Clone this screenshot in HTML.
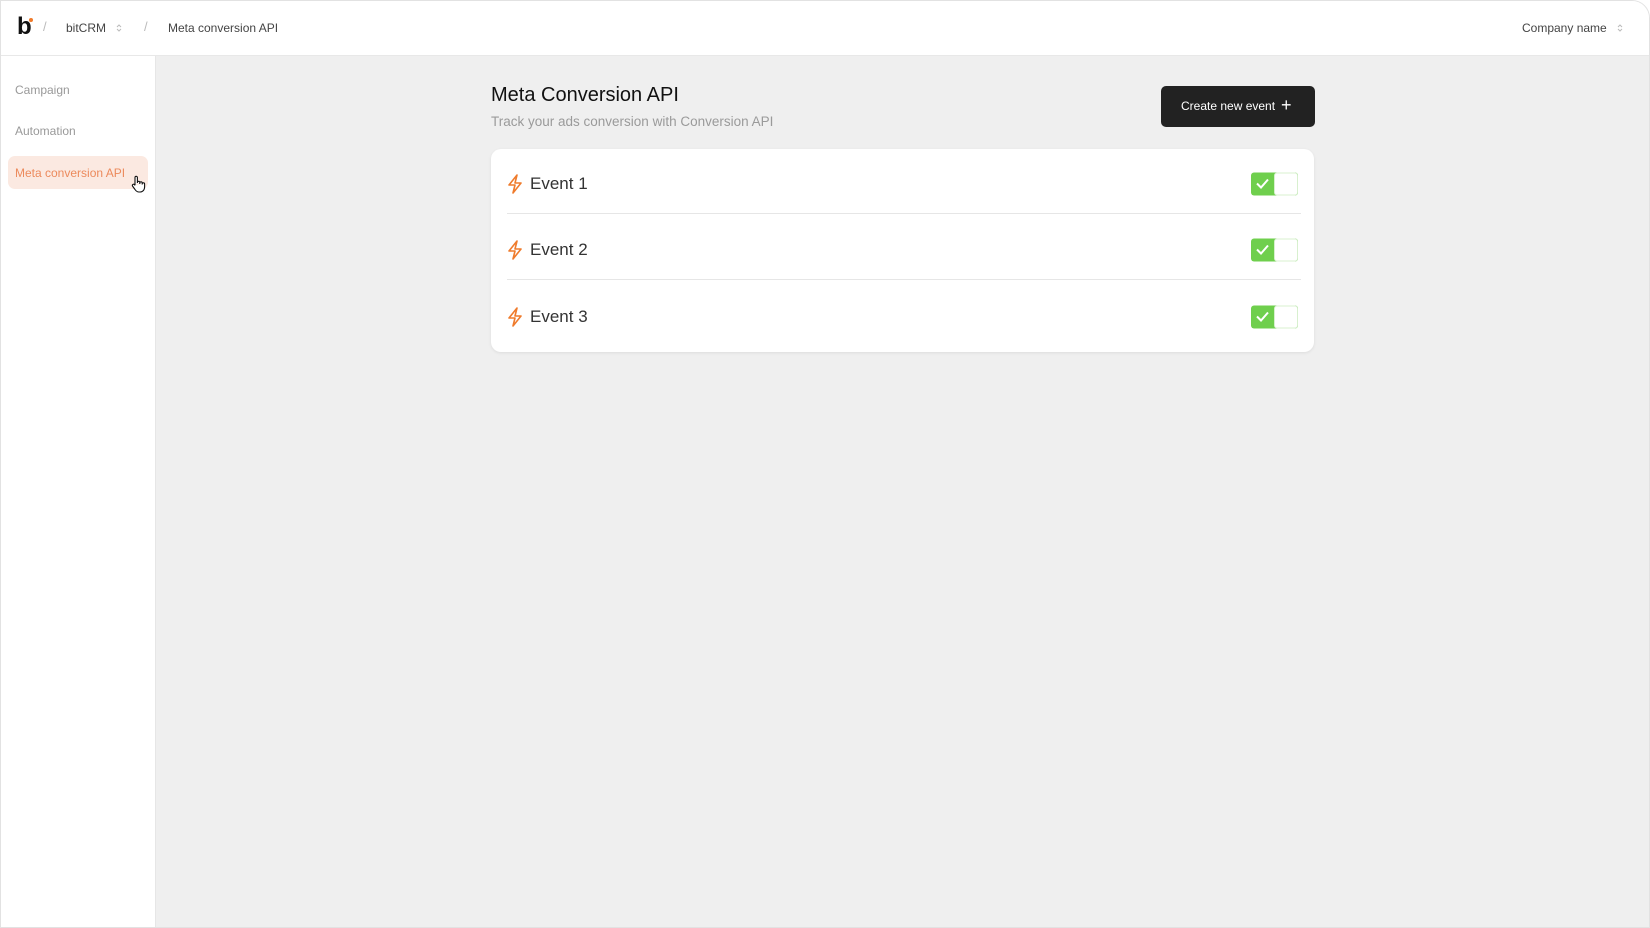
<!DOCTYPE html>
<html><head><meta charset="utf-8"><style>
*{margin:0;padding:0;box-sizing:border-box}
body{width:1650px;height:928px;overflow:hidden;background:#fff;font-family:"Liberation Sans",sans-serif;position:relative}
.frame{position:absolute;left:0;top:0;width:1650px;height:928px;border:1px solid #e2e2e2;border-radius:0 18px 0 0;overflow:hidden}
.hdr{position:absolute;left:0;top:0;width:1650px;height:55px;border-bottom:1px solid #e8e8e8;background:#fff}
.t{position:absolute;font-size:12px;color:#444;white-space:nowrap}
.side{position:absolute;left:0;top:55px;width:155px;bottom:0;background:#fff;border-right:1px solid #e6e6e6}
.main{position:absolute;left:155px;top:55px;right:0;bottom:0;background:#efefef}
.nav{position:absolute;left:14px;font-size:12px;color:#999}
.card{position:absolute;left:490px;top:148px;width:823px;height:203px;background:#fff;border-radius:10px;box-shadow:0 1px 3px rgba(0,0,0,.08)}
.row{position:absolute;left:0;width:100%;height:66px}
.ev{position:absolute;left:39px;font-size:17px;color:#333;top:50%;transform:translateY(-50%)}
.ic{position:absolute;left:16px;top:50%;transform:translateY(-50%)}
.tg{position:absolute;left:760px;top:50%;transform:translateY(-50%);width:47px;height:23px;border-radius:3px;background:#6fcf4d;overflow:hidden}
.tg .k{position:absolute;right:0;top:0;width:24px;height:23px;background:#fff;border:1px solid #d8f0cf;border-radius:3px}
.tg svg{position:absolute;left:5px;top:5px}
.div{position:absolute;left:16px;right:13px;height:1px;background:#e6e6e6}
</style></head><body>
<div class="frame">
<div class="hdr">
 <div style="position:absolute;left:16px;top:12px;font-size:24px;font-weight:bold;color:#111;line-height:28px">b</div>
 <div style="position:absolute;left:28px;top:17px;width:4px;height:4px;border-radius:50%;background:#f07a2a"></div>
 <div class="t" style="left:42px;top:18px;color:#bbb;font-size:13px">/</div>
 <div class="t" style="left:65px;top:20px">bitCRM</div>
 <svg style="position:absolute;left:115px;top:22px" width="6" height="10" viewBox="0 0 6 10"><path d="M1 4l2-2 2 2M1 6l2 2 2-2" stroke="#bbb" fill="none"/></svg>
 <div class="t" style="left:143px;top:18px;color:#bbb;font-size:13px">/</div>
 <div class="t" style="left:167px;top:20px">Meta conversion API</div>
 <div class="t" style="left:1521px;top:20px">Company name</div>
 <svg style="position:absolute;left:1616px;top:22px" width="6" height="10" viewBox="0 0 6 10"><path d="M1 4l2-2 2 2M1 6l2 2 2-2" stroke="#bbb" fill="none"/></svg>
</div>
<div class="side">
 <div class="nav" style="top:27px">Campaign</div>
 <div class="nav" style="top:68px">Automation</div>
 <div style="position:absolute;left:7px;top:100px;width:140px;height:33px;border-radius:7px;background:#fbe9e1"></div>
 <div class="nav" style="top:110px;color:#ec8a5c">Meta conversion API</div>
 <svg style="position:absolute;left:130px;top:119px" width="16" height="18" viewBox="0 0 16 18"><path d="M4 10V2.5a1.2 1.2 0 0 1 2.4 0V8M6.4 7.5a1.2 1.2 0 0 1 2.4 0V9M8.8 8a1.2 1.2 0 0 1 2.4 0v1.5M11.2 9a1.2 1.2 0 0 1 2.4 0v3c0 3-2 5-4.5 5H8c-2 0-3-1-4-2.5L1.5 11a1.2 1.2 0 0 1 2-1.3L4 10.5" fill="#fff" stroke="#111" stroke-width="1.1" stroke-linejoin="round"/></svg>
</div>
<div class="main"></div>
<div style="position:absolute;left:490px;top:83px;font-size:20px;color:#111">Meta Conversion API</div>
<div style="position:absolute;left:490px;top:113px;font-size:13.5px;color:#9a9a9a">Track your ads conversion with Conversion API</div>
<div style="position:absolute;left:1160px;top:85px;width:154px;height:41px;background:#222;border-radius:5px;color:#fff;font-size:12px;line-height:41px;padding-left:20px">Create new event <span style="font-size:18px;position:absolute;left:120px;top:-1px">+</span></div>
<div class="card">
 <div class="row" style="top:2px"><svg class="ic" width="16" height="20" viewBox="0 0 16 20"><path d="M10 1L2 11h6l-2 8 8-10H8l2-8z" fill="none" stroke="#ef7b2c" stroke-width="1.6" stroke-linejoin="round"/></svg><div class="ev">Event 1</div><div class="tg"><svg width="13" height="12"><path d="M1 6l4 4 7-8" stroke="#fff" stroke-width="2" fill="none"/></svg><div class="k"></div></div></div>
 <div class="div" style="top:64px"></div>
 <div class="row" style="top:68px"><svg class="ic" width="16" height="20" viewBox="0 0 16 20"><path d="M10 1L2 11h6l-2 8 8-10H8l2-8z" fill="none" stroke="#ef7b2c" stroke-width="1.6" stroke-linejoin="round"/></svg><div class="ev">Event 2</div><div class="tg"><svg width="13" height="12"><path d="M1 6l4 4 7-8" stroke="#fff" stroke-width="2" fill="none"/></svg><div class="k"></div></div></div>
 <div class="div" style="top:130px"></div>
 <div class="row" style="top:135px"><svg class="ic" width="16" height="20" viewBox="0 0 16 20"><path d="M10 1L2 11h6l-2 8 8-10H8l2-8z" fill="none" stroke="#ef7b2c" stroke-width="1.6" stroke-linejoin="round"/></svg><div class="ev">Event 3</div><div class="tg"><svg width="13" height="12"><path d="M1 6l4 4 7-8" stroke="#fff" stroke-width="2" fill="none"/></svg><div class="k"></div></div></div>
</div>
</div>
</body></html>
